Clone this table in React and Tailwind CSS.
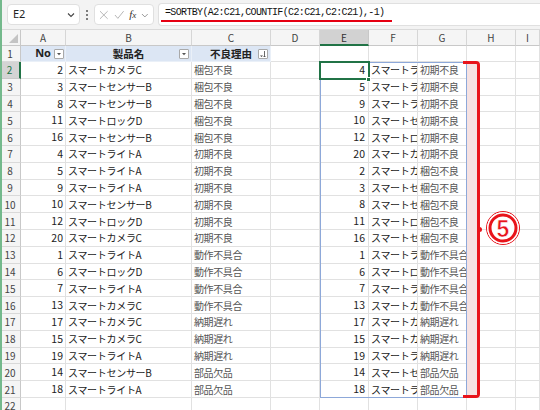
import React from 'react'

const cols = [
	{ k: 'A', w: 'w-[45px]' },
	{ k: 'B', w: 'w-[126px]' },
	{ k: 'C', w: 'w-[79px]' },
	{ k: 'D', w: 'w-[49px]' },
	{ k: 'E', w: 'w-[49px]' },
	{ k: 'F', w: 'w-[49px]' },
	{ k: 'G', w: 'w-[49px]' },
	{ k: 'H', w: 'w-[49px]' },
	{ k: 'I', w: 'flex-1' },
]

const table = [
	[2, 'スマートカメラC', '梱包不良'],
	[3, 'スマートセンサーB', '梱包不良'],
	[8, 'スマートセンサーB', '梱包不良'],
	[11, 'スマートロックD', '梱包不良'],
	[16, 'スマートセンサーB', '梱包不良'],
	[4, 'スマートライトA', '初期不良'],
	[5, 'スマートライトA', '初期不良'],
	[9, 'スマートライトA', '初期不良'],
	[10, 'スマートセンサーB', '初期不良'],
	[12, 'スマートロックD', '初期不良'],
	[20, 'スマートカメラC', '初期不良'],
	[1, 'スマートライトA', '動作不具合'],
	[6, 'スマートロックD', '動作不具合'],
	[7, 'スマートライトA', '動作不具合'],
	[13, 'スマートカメラC', '動作不具合'],
	[17, 'スマートカメラC', '納期遅れ'],
	[15, 'スマートカメラC', '納期遅れ'],
	[19, 'スマートライトA', '納期遅れ'],
	[14, 'スマートセンサーB', '部品欠品'],
	[18, 'スマートライトA', '部品欠品'],
]

const order = ['初期不良', '梱包不良', '動作不具合', '納期遅れ', '部品欠品']
const sorted = order.flatMap((r) => table.filter((t) => t[2] === r))

const cell = 'shrink-0 h-full border-r border-b border-[#e1e1e1] flex items-center overflow-hidden whitespace-nowrap'

function FilterBtn({ sort }) {
	return (
		<div className="shrink-0 w-[10px] h-[10px] bg-white border border-[#a9a9a9] rounded-[1px] flex items-center justify-center">
			{sort ? (
				<svg width="8" height="8" viewBox="0 0 8 8">
					<path d="M1 5.5h3L2.5 7z" fill="#444" />
					<path d="M5.5 1v6M4.5 6l1 1 1-1" stroke="#444" strokeWidth="0.8" fill="none" />
				</svg>
			) : (
				<svg width="6" height="6" viewBox="0 0 6 6">
					<path d="M1 2h4L3 4.2z" fill="#555" />
				</svg>
			)}
		</div>
	)
}

function RowHead({ n, sel }) {
	return (
		<div
			className={
				sel
					? 'shrink-0 w-[21px] h-full bg-[#d4d4d4] border-r-2 border-r-[#217346] border-b border-b-[#c8c8c8] flex items-center justify-center text-[10px] text-[#217346]'
					: 'shrink-0 w-[21px] h-full bg-[#f5f5f5] border-r border-r-[#c8c8c8] border-b border-b-[#d9d9d9] flex items-center justify-center text-[10px] text-[#444]'
			}
		>
			{n}
		</div>
	)
}

function App() {
	return (
		<div className="relative w-[540px] h-[410px] overflow-hidden bg-white font-['Noto_Sans_CJK_JP',sans-serif] text-[#222]">
			{/* formula bar */}
			<div className="h-[30px] bg-[#f3f3f3] flex items-center pl-[7px] gap-[4px] border-b border-[#dadada]">
				<div className="w-[73px] h-[21px] bg-white rounded-[4px] border border-[#e0e0e0] flex items-center justify-between pl-[5px] pr-[3px]">
					<span className="text-[11px] font-['Noto_Sans',sans-serif] text-[#222]">E2</span>
					<svg width="10" height="10" viewBox="0 0 10 10">
						<path d="M2 3.5l3 3 3-3" stroke="#444" strokeWidth="1.1" fill="none" />
					</svg>
				</div>
				<div className="w-[6px] flex flex-col items-center gap-[2px]">
					<span className="w-[2px] h-[2px] bg-[#555] rounded-full" />
					<span className="w-[2px] h-[2px] bg-[#555] rounded-full" />
					<span className="w-[2px] h-[2px] bg-[#555] rounded-full" />
				</div>
				<div className="w-[60px] h-[21px] bg-white rounded-[4px] border border-[#e0e0e0] flex items-center px-[4px] gap-[5px]">
					<svg width="10" height="10" viewBox="0 0 10 10">
						<path d="M1 1l8 8M9 1l-8 8" stroke="#b4b4b4" strokeWidth="1" />
					</svg>
					<svg width="11" height="10" viewBox="0 0 11 10">
						<path d="M1 5l3 3.5L10 1" stroke="#b4b4b4" strokeWidth="1" fill="none" />
					</svg>
					<span className="text-[11px] italic font-['Liberation_Serif',serif] text-[#333] leading-none">
						f<span className="text-[9px]">x</span>
					</span>
					<svg width="8" height="8" viewBox="0 0 8 8">
						<path d="M1 3l3 3 3-3" stroke="#888" strokeWidth="0.9" fill="none" />
					</svg>
				</div>
				<div className="flex-1 h-[23px] bg-white rounded-l-[4px] border border-r-0 border-[#e0e0e0] flex items-start pl-[6px] pt-[2px]">
					<div className="flex flex-col">
						<span className="text-[10px] tracking-[-0.65px] font-['Liberation_Mono',monospace] text-[#111] leading-[13px]">
							=SORTBY(A2:C21,COUNTIF(C2:C21,C2:C21),-1)
						</span>
						<span className="mt-[1px] -ml-[4px] w-[231px] h-[2px] bg-[#e60012]" />
					</div>
				</div>
			</div>

			{/* grid */}
			<div className="relative">
				<div className="flex h-[16px] bg-[#f5f5f5]">
					<div className="shrink-0 w-[21px] h-full border-r border-b border-[#c8c8c8] flex items-end justify-end p-[2px]">
						<svg width="9" height="9" viewBox="0 0 9 9">
							<path d="M9 0v9H0z" fill="#c4c4c4" />
						</svg>
					</div>
					{cols.map((c) => (
						<div
							key={c.k}
							className={
								c.k === 'E'
									? `${c.w} shrink-0 h-full bg-[#d2d2d2] border-r border-r-[#c8c8c8] border-b-2 border-b-[#217346] flex items-center justify-center text-[10px] text-[#333]`
									: `${c.w} shrink-0 h-full border-r border-r-[#d6d6d6] border-b border-b-[#c8c8c8] flex items-center justify-center text-[10px] text-[#444]`
							}
						>
							{c.k}
						</div>
					))}
				</div>

				<div className="flex h-[16px]">
					<RowHead n={1} />
					<div className={`${cell} w-[45px] bg-[#dce6f4] border-[#eaf0f8] justify-end gap-[3px] pr-[1px]`}>
						<span className="text-[11px] font-bold font-['Noto_Sans',sans-serif]">No</span>
						<FilterBtn />
					</div>
					<div className={`${cell} w-[126px] bg-[#dce6f4] border-[#eaf0f8] pr-[2px]`}>
						<span className="w-[12px]" />
						<span className="flex-1 text-center text-[10.5px] font-bold">製品名</span>
						<FilterBtn />
					</div>
					<div className={`${cell} w-[79px] bg-[#dce6f4] border-[#eaf0f8] pr-[2px]`}>
						<span className="w-[12px]" />
						<span className="flex-1 text-center text-[10.5px] font-bold">不良理由</span>
						<FilterBtn sort />
					</div>
					{['D', 'E', 'F', 'G', 'H'].map((k) => (
						<div key={k} className={`${cell} w-[49px]`} />
					))}
					<div className={`${cell} flex-1`} />
				</div>

				{table.map((t, i) => {
					const s = sorted[i]
					return (
						<div key={i} className="flex h-[16.8px]">
							<RowHead n={i + 2} sel={i === 0} />
							<div className={`${cell} w-[45px] justify-end pr-[2px] text-[10.5px]`}>{t[0]}</div>
							<div className={`${cell} w-[126px] pl-[2px] text-[10px] tracking-[-0.3px]`}>{t[1]}</div>
							<div className={`${cell} w-[79px] pl-[2px] text-[10px] text-[#555] tracking-[-0.4px]`}>{t[2]}</div>
							<div className={`${cell} w-[49px]`} />
							<div className={`${cell} w-[49px] justify-end pr-[3px] text-[10.5px]`}>{s[0]}</div>
							<div className={`${cell} w-[49px] pl-[2px] text-[10px] tracking-[-0.3px]`}>{s[1]}</div>
							<div className={`${cell} w-[49px] pl-[2px] text-[10px] text-[#555] tracking-[-0.4px] overflow-visible`}>{s[2]}</div>
							<div className={`${cell} w-[49px]`} />
							<div className={`${cell} flex-1`} />
						</div>
					)
				})}

				<div className="flex h-[16px]">
					<RowHead n={22} />
					{cols.map((c) => (
						<div key={c.k} className={`${cell} ${c.w}`} />
					))}
				</div>

				{/* overlays */}
				<div className="absolute left-[467px] top-[33px] w-[11px] h-[334px] bg-[#f6e2e2]" />
				<div className="absolute left-[320px] top-[32px] w-[147px] h-[336px] border border-[#8da8d9]" />
				<div className="absolute left-[319px] top-[31px] w-[51px] h-[19px] border-2 border-[#217346]" />
				<div className="absolute left-[366px] top-[47px] w-[5px] h-[5px] bg-[#217346] border border-white" />
				<div className="absolute left-[463px] top-[31px] w-[17px] h-[337px] border-[3px] border-l-0 border-[#e8141b] rounded-r-[4px]" />
				<div className="absolute left-[477px] top-[197px] w-[5px] h-[5px] rounded-full bg-[#e8141b]" />
				<svg className="absolute left-[485px] top-[180px]" width="36" height="36" viewBox="0 0 36 36">
					<circle cx="18" cy="18" r="16.5" fill="none" stroke="#e8141b" strokeWidth="1" />
					<circle cx="18" cy="18" r="14.5" fill="white" stroke="white" strokeWidth="2.5" />
					<circle cx="18" cy="18" r="13" fill="white" stroke="#e8141b" strokeWidth="3" />
					<text
						x="18"
						y="26.5"
						textAnchor="middle"
						fontSize="23"
						fontWeight="bold"
						fontFamily="'Liberation Sans', sans-serif"
						fill="#e8141b"
						stroke="white"
						strokeWidth="0.6"
					>
						5
					</text>
				</svg>
			</div>

			<div className="absolute left-0 top-0 w-[2px] h-full bg-[#74b98c]" />
		</div>
	)
}

export default App
